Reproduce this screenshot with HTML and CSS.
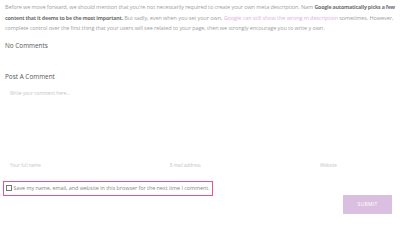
FILE: index.html
```html
<!DOCTYPE html>
<html>
<head>
<meta charset="utf-8">
<link rel="stylesheet" href="styles.css">
</head>
<body>
<div class="page">
  <p class="intro">
    <span class="line">Before we move forward, we should mention that you're not necessarily required to create your own meta description. Nam <b>Google automatically picks a few</b></span>
    <span class="line"><b>content that it deems to be the most important.</b> But sadly, even when you set your own, <a class="link">Google can still show the wrong m description</a> sometimes. However,</span>
    <span class="line">complete control over the first thing that your users will see related to your page, then we strongly encourage you to write y own.</span>
  </p>
  <h3 class="heading no-comments">No Comments</h3>
  <h3 class="heading post">Post A Comment</h3>
  <div class="comment-box">Write your comment here...</div>
  <div class="fields">
    <div class="field">Your full name</div>
    <div class="field">E-mail address</div>
    <div class="field">Website</div>
  </div>
  <label class="consent"><span class="box"></span>Save my name, email, and website in this browser for the next time I comment.</label>
  <div class="actions"><button class="submit">SUBMIT</button></div>
</div>
</body>
</html>
```
FILE: styles.css
```css
html, body { margin: 0; padding: 0; background: #fff; overflow: hidden; }
body { width: 400px; height: 225px; font-family: "Open Sans", "Noto Sans", sans-serif; }
.page { padding: 0 5px; }
.intro { margin: 0; padding-top: 2px; font-size: 5.5px; letter-spacing: -0.08px; line-height: 10.5px; color: #a0a0a0; }
.line { display: block; white-space: nowrap; }
.intro b { color: #707070; font-weight: 700; font-size: 5.3px; letter-spacing: -0.2px; }
.link { color: #dcb0df; }
.heading { margin: 0; font-weight: 400; font-size: 6.4px; color: #555; }
.no-comments { margin-top: 7px; }
.post { margin-top: 22px; }
.comment-box { margin-top: 9px; padding-left: 5px; height: 72px; font-size: 4.7px; color: #c4c4c4; }
.fields { display: grid; grid-template-columns: 160px 150px 1fr; padding-left: 5px; font-size: 4.5px; color: #c4c4c4; }
.consent { display: flex; align-items: center; margin: 13px 0 0 -2px; width: 206px; height: 13px; padding-left: 2px; border: 1.5px solid #e8557d; font-size: 5.45px; letter-spacing: -0.05px; color: #888; white-space: nowrap; }
.box { width: 4px; height: 4px; border: 0.8px solid #777; margin-right: 1.5px; flex: none; }
.actions { display: flex; justify-content: flex-end; padding-right: 3px; margin-top: -1px; }
.submit { width: 49px; height: 19px; border: 0; background: #dbbfe0; color: #fff; font-size: 5px; font-family: inherit; letter-spacing: 0.3px; padding: 0; }
```
